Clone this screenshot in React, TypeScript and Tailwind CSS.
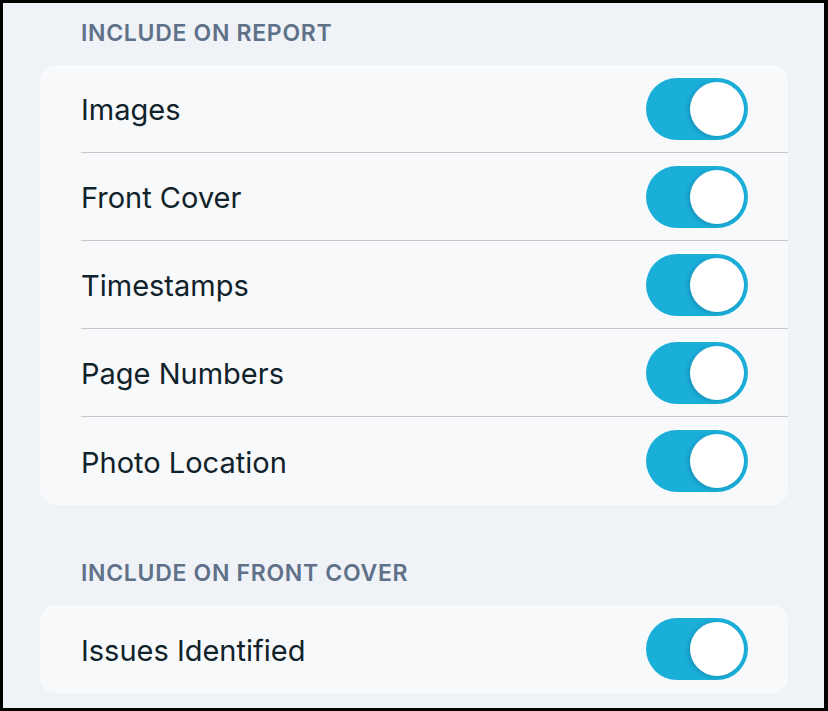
const reportItems = ["Images", "Front Cover", "Timestamps", "Page Numbers", "Photo Location"]
const coverItems = ["Issues Identified"]

function Toggle() {
  return (
    <div className="w-[102px] h-[62px] rounded-full bg-[#1aafd9] p-[4px] flex justify-end shrink-0">
      <div className="w-[54px] h-[54px] rounded-full bg-white shadow-[-2px_1px_4px_rgba(0,60,90,0.25)]" />
    </div>
  )
}

function Row({ label, last }: { label: string; last: boolean }) {
  return (
    <div className="pl-[41px]">
      <div
        className={`h-[88px] flex items-center justify-between pr-[40px] ${
          last ? "" : "border-b border-[#c8c9cc]"
        }`}
      >
        <span className="pt-[3px] text-[29px] text-[#10222a]">{label}</span>
        <Toggle />
      </div>
    </div>
  )
}

function Section({ title, items, top }: { title: string; items: string[]; top: string }) {
  return (
    <div>
      <div className={`${top} pb-[20px] pl-[41px] text-[23px] leading-[24px] font-semibold tracking-[0.03em] text-[#5f7189]`}>
        {title}
      </div>
      <div className="bg-[#f8f9fb] rounded-[16px]">
        {items.map((item, i) => (
          <Row key={item} label={item} last={i === items.length - 1} />
        ))}
      </div>
    </div>
  )
}

export default function App() {
  return (
    <div
      className="w-[828px] h-[711px] border-[3px] border-r-[4px] border-black bg-[#eff2f7] pl-[37px] pr-[36px] overflow-hidden"
      style={{ fontFamily: "Inter, 'Noto Sans', sans-serif" }}
    >
      <Section title="INCLUDE ON REPORT" items={reportItems} top="pt-[18px]" />
      <Section title="INCLUDE ON FRONT COVER" items={coverItems} top="pt-[56px]" />
    </div>
  )
}
